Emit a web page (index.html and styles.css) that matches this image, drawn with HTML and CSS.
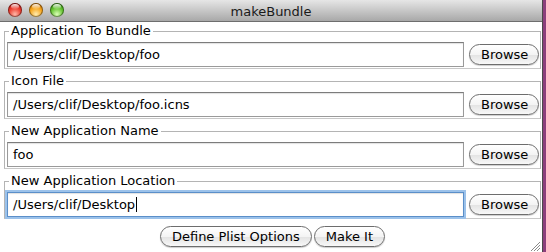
FILE: index.html
```html
<!DOCTYPE html>
<html lang="en">
<head>
    <meta charset="UTF-8">
    <title>makeBundle</title>
    <link rel="stylesheet" href="styles.css">
</head>
<body>
    <div class="window">
        <div class="titlebar">
            <div class="lights">
                <span class="light red"></span>
                <span class="light yellow"></span>
                <span class="light green"></span>
            </div>
            <div class="title">makeBundle</div>
        </div>

        <div class="content">
            <fieldset class="group">
                <legend>Application To Bundle</legend>
                <div class="row">
                    <div class="field">/Users/clif/Desktop/foo</div>
                    <button class="btn">Browse</button>
                </div>
            </fieldset>
            <fieldset class="group">
                <legend>Icon File</legend>
                <div class="row">
                    <div class="field">/Users/clif/Desktop/foo.icns</div>
                    <button class="btn">Browse</button>
                </div>
            </fieldset>
            <fieldset class="group">
                <legend>New Application Name</legend>
                <div class="row">
                    <div class="field">foo</div>
                    <button class="btn">Browse</button>
                </div>
            </fieldset>
            <fieldset class="group">
                <legend>New Application Location</legend>
                <div class="row">
                    <div class="field focused">/Users/clif/Desktop<span class="caret"></span></div>
                    <button class="btn">Browse</button>
                </div>
            </fieldset>

            <div class="actions">
                <button class="btn">Define Plist Options</button>
                <button class="btn">Make It</button>
            </div>
        </div>

        <svg class="grip" width="10" height="10" viewBox="0 0 10 10">
            <path d="M1 10 L10 1 M4 10 L10 4 M7 10 L10 7" stroke="#8a8a8a" stroke-width="1"/>
        </svg>
    </div>
</body>
</html>
```

FILE: styles.css
```css
*{
    margin: 0;
    padding: 0;
    box-sizing: border-box;
}
body{
    width: 546px;
    height: 252px;
    background: #8c3f7c;
    font-family: "DejaVu Sans", sans-serif;
    font-size: 12px;
    color: #000;
    overflow: hidden;
}
.window{
    width: 543px;
    height: 252px;
    background: #fff;
    border-right: 1px solid #4a4a4a;
    position: relative;
}
.titlebar{
    height: 22px;
    background: linear-gradient(#e6e6e6, #c4c4c4 55%, #a8a8a8);
    border-bottom: 1px solid #6e6e6e;
    position: relative;
    display: flex;
    align-items: center;
    justify-content: center;
}
.lights{
    position: absolute;
    left: 8px;
    top: 3px;
    display: flex;
    gap: 7px;
}
.light{
    width: 14px;
    height: 14px;
    border-radius: 50%;
    display: block;
    box-shadow: inset 0 0 0 1px rgba(0,0,0,0.4);
    position: relative;
}
.light::after{
    content: "";
    position: absolute;
    left: 3px;
    top: 1px;
    width: 8px;
    height: 5px;
    border-radius: 50%;
    background: linear-gradient(rgba(255,255,255,0.9), rgba(255,255,255,0.1));
}
.red{
    background: radial-gradient(circle at 50% 80%, #ffb8a8 0, #ec3a2c 50%, #9c0e0e 100%);
}
.yellow{
    background: radial-gradient(circle at 50% 80%, #ffecb0 0, #f6a41a 50%, #a65800 100%);
}
.green{
    background: radial-gradient(circle at 50% 80%, #dcffb8 0, #62c22e 50%, #2a7812 100%);
}
.title{
    font-size: 13px;
    color: #1a1a1a;
    padding-top: 1px;
}

.content{
    padding: 1px 1px 0 4px;
}
.group{
    border: 1px solid #b4b4b4;
    border-bottom-color: #c8c8c8;
    padding: 0 1px 1px 2px;
    margin-bottom: 4px;
}
.group legend{
    font-size: 13px;
    line-height: 16px;
    margin-left: 2px;
    padding: 0 2px 0 2px;
    color: #000;
}
.row{
    display: flex;
    align-items: center;
    gap: 5px;
    padding-top: 3px;
}
.field{
    flex: 1;
    height: 25px;
    border: 1px solid #9a9a9a;
    border-top-color: #7c7c7c;
    box-shadow: inset 0 1px 1px rgba(0,0,0,0.12);
    padding: 0 5px;
    font-size: 13px;
    line-height: 23px;
    white-space: nowrap;
}
.field.focused{
    border: 1px solid #5b8fc9;
    box-shadow: 0 0 0 2px #9cc2ea, inset 0 1px 1px rgba(0,0,0,0.12);
}
.caret{
    display: inline-block;
    width: 1px;
    height: 15px;
    background: #000;
    vertical-align: -3px;
    margin-left: 1px;
}
.btn{
    font-family: "DejaVu Sans", sans-serif;
    font-size: 13px;
    color: #000;
    height: 21px;
    padding: 0 11px;
    border: 1px solid #6d6d6d;
    border-radius: 11px;
    background: linear-gradient(#ffffff, #f4f4f4 50%, #e2e2e2 51%, #f8f8f8);
    box-shadow: 0 1px 1px rgba(0,0,0,0.2);
    line-height: 19px;
}
.row .btn{
    width: 70px;
}
.actions{
    display: flex;
    justify-content: center;
    gap: 2px;
    padding-top: 3px;
}
.grip{
    position: absolute;
    right: 2px;
    bottom: 1px;
}
```
